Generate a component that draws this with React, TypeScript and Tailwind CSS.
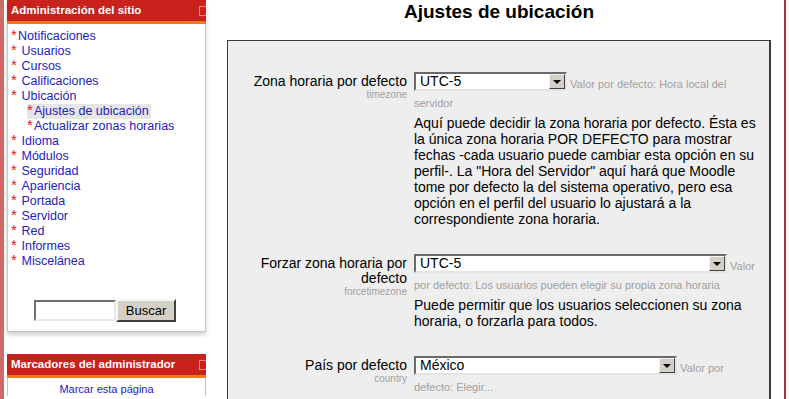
const Star = () => (
  <span className="inline-block w-[7px] text-[15px] leading-[12px] text-[#e02020] align-top">*</span>
);

const menu: { label: string; sub?: boolean; active?: boolean; tight?: boolean }[] = [
  { label: "Notificaciones", tight: true },
  { label: "Usuarios" },
  { label: "Cursos" },
  { label: "Calificaciones" },
  { label: "Ubicación" },
  { label: "Ajustes de ubicación", sub: true, active: true },
  { label: "Actualizar zonas horarias", sub: true },
  { label: "Idioma" },
  { label: "Módulos" },
  { label: "Seguridad" },
  { label: "Apariencia" },
  { label: "Portada" },
  { label: "Servidor" },
  { label: "Red" },
  { label: "Informes" },
  { label: "Miscelánea" },
];

const BlockHeader = ({ title }: { title: string }) => (
  <div>
    <div className="h-[21px] bg-[#c9211c] flex items-center justify-between pl-[4px] overflow-hidden">
      <span className="text-white font-bold text-[11.5px]">{title}</span>
      <span className="w-[10px] h-[10px] border border-[#e88a8a] -mr-[3px] shrink-0" />
    </div>
    <div className="h-[3px] bg-[#f07a1e]" />
  </div>
);

const Select = ({ value, width }: { value: string; width: string }) => (
  <div
    className={`${width} inline-flex align-top h-[19px] bg-white border-2 border-t-[#6a6a6a] border-l-[#6a6a6a] border-r-[#e4e4e4] border-b-[#e4e4e4]`}
  >
    <span className="flex-1 pl-[4px] text-[14px] leading-[15px] text-black">{value}</span>
    <span className="w-[16px] h-[15px] bg-[#d4d0c8] border border-t-[#f4f4f4] border-l-[#f4f4f4] border-r-[#404040] border-b-[#404040] flex items-center justify-center">
      <span className="w-0 h-0 border-l-[4px] border-r-[4px] border-t-[4px] border-l-transparent border-r-transparent border-t-black" />
    </span>
  </div>
);

const Row = ({
  label,
  name,
  select,
  width,
  hint,
  desc,
}: {
  label: React.ReactNode;
  name: string;
  select: string;
  width: string;
  hint: string;
  desc?: string;
}) => (
  <div className="flex">
    <div className="w-[179px] text-right">
      <div className="text-[14px] leading-[15px] text-black pt-[2px]">{label}</div>
      <div className="text-[10px] leading-[12px] text-[#a0a0a0]">{name}</div>
    </div>
    <div className="ml-[7px] w-[350px]">
      <div className="text-[11px] leading-[14px] text-[#a0a0a0]">
        <Select value={select} width={width} /> <span className="relative top-[5px]">{hint}</span>
      </div>
      {desc && (
        <div className="mt-[10px] text-[14px] leading-[16px] text-black">{desc}</div>
      )}
    </div>
  </div>
);

export default function App() {
  return (
    <div
      className="w-[789px] h-[399px] overflow-hidden bg-white flex"
      style={{ fontFamily: '"Liberation Sans", Arial, sans-serif' }}
    >
      <div className="w-[4px] shrink-0 bg-[#d26868]" />

      {/* Sidebar */}
      <div className="ml-[3px] w-[199px] shrink-0">
        <div className="shadow-[0_3px_4px_rgba(0,0,0,0.18)]">
          <BlockHeader title="Administración del sitio" />
          <div className="border-x border-b border-[#c4c4c4] pl-[3px] pt-[5px] pb-[9px] text-[12.5px] leading-[15px] text-[#2222c0]">
            {menu.map((m) => (
              <div key={m.label} className={m.sub ? "pl-[16px]" : ""}>
                <span className={`inline-block pr-[2px] ${m.active ? "bg-[#e6e6e6]" : ""}`}>
                  <Star />
                  {m.tight || m.sub ? "" : "\u00a0"}
                  {m.label}
                </span>
              </div>
            ))}
            <div className="mt-[30px] flex justify-center items-center pr-[6px]">
              <div className="w-[82px] h-[21px] bg-white border-2 border-t-[#707070] border-l-[#707070] border-r-[#e8e8e8] border-b-[#e8e8e8]" />
              <button className="w-[60px] h-[23px] bg-[#d4d0c8] text-black text-[13px] border-2 border-t-[#f6f6f6] border-l-[#f6f6f6] border-r-[#404040] border-b-[#404040]">
                Buscar
              </button>
            </div>
          </div>
        </div>

        <div className="mt-[22px]">
          <BlockHeader title="Marcadores del administrador" />
          <div className="border-x border-[#c4c4c4] text-center text-[11px] leading-[14px] pt-[4px] text-[#2222c0]">
            Marcar esta página
          </div>
        </div>
      </div>

      {/* Main */}
      <div className="ml-[8px] w-[570px] shrink-0 px-[13px]">
        <h2 className="h-[40px] pt-[1px] text-center text-[19px] leading-[22px] font-bold text-black">
          Ajustes de ubicación
        </h2>
        <div className="h-[400px] bg-[#eeeeee] border border-[#3a3a3a] border-r-2 pt-[31px] flex flex-col gap-[27px]">
          <Row
            label="Zona horaria por defecto"
            name="timezone"
            select="UTC-5"
            width="w-[153px]"
            hint="Valor por defecto: Hora local del servidor"
            desc={'Aquí puede decidir la zona horaria por defecto. Ésta es la única zona horaria POR DEFECTO para mostrar fechas -cada usuario puede cambiar esta opción en su perfil-. La "Hora del Servidor" aquí hará que Moodle tome por defecto la del sistema operativo, pero esa opción en el perfil del usuario lo ajustará a la correspondiente zona horaria.'}
          />
          <Row
            label={
              <>
                Forzar zona horaria por
                <br />
                defecto
              </>
            }
            name="forcetimezone"
            select="UTC-5"
            width="w-[313px]"
            hint="Valor por defecto: Los usuarios pueden elegir su propia zona horaria"
            desc="Puede permitir que los usuarios seleccionen su zona horaria, o forzarla para todos."
          />
          <Row
            label="País por defecto"
            name="country"
            select="México"
            width="w-[263px]"
            hint="Valor por defecto: Elegir..."
          />
        </div>
      </div>

      <div className="w-[2px] shrink-0 bg-[#a83838]" />
    </div>
  );
}
